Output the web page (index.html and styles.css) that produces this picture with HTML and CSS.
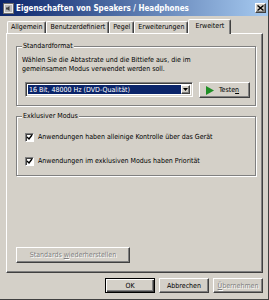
FILE: index.html
```html
<!DOCTYPE html>
<html lang="de">
<head>
    <meta charset="UTF-8">
    <title>Eigenschaften von Speakers / Headphones</title>
    <link rel="stylesheet" href="styles.css">
</head>
<body>
    <div class="window">
        <div class="titlebar">
            <svg class="app-icon" viewBox="0 0 11 11">
                <rect x="0.5" y="0.5" width="10" height="10" fill="#e8e8e8" stroke="#6b6b6b"/>
                <rect x="2" y="2" width="7" height="7" fill="#b8b8b8"/>
                <path d="M3 4.5h1.5l2-1.5v5l-2-1.5H3z" fill="#404040"/>
            </svg>
            <span class="title">Eigenschaften von Speakers / Headphones</span>
            <div class="close-btn">
                <svg viewBox="0 0 7 6" width="7" height="6">
                    <path d="M0.5 0.5l6 5M6.5 0.5l-6 5" stroke="#000" stroke-width="1.4"/>
                </svg>
            </div>
        </div>

        <div class="content">
            <div class="tabs">
                <div class="tab">Allgemein</div>
                <div class="tab">Benutzerdefiniert</div>
                <div class="tab">Pegel</div>
                <div class="tab">Erweiterungen</div>
                <div class="tab active">Erweitert</div>
            </div>

            <div class="tab-panel">
                <fieldset class="group format-group">
                    <legend>Standardformat</legend>
                    <p class="hint">Wählen Sie die Abtastrate und die Bittiefe aus, die im<br>gemeinsamen Modus verwendet werden soll.</p>
                    <div class="format-row">
                        <div class="combo">
                            <span class="combo-value">16 Bit, 48000 Hz (DVD-Qualität)</span>
                            <span class="combo-arrow">
                                <svg viewBox="0 0 5 3" width="5" height="3"><path d="M0 0h5L2.5 3z" fill="#000"/></svg>
                            </span>
                        </div>
                        <div class="btn test-btn">
                            <svg viewBox="0 0 8 9" width="8" height="9"><path d="M0 0l8 4.5L0 9z" fill="#1f8f25"/></svg>
                            <span>Teste<u>n</u></span>
                        </div>
                    </div>
                </fieldset>

                <fieldset class="group exclusive-group">
                    <legend>Exklusiver Modus</legend>
                    <div class="check">
                        <span class="box"><svg viewBox="0 0 7 7" width="7" height="7"><path d="M1 3l2 2 3-4" stroke="#000" stroke-width="1.4" fill="none"/></svg></span>
                        <span>Anwendungen haben alleinige Kontrolle über das Gerät</span>
                    </div>
                    <div class="check">
                        <span class="box"><svg viewBox="0 0 7 7" width="7" height="7"><path d="M1 3l2 2 3-4" stroke="#000" stroke-width="1.4" fill="none"/></svg></span>
                        <span>Anwendungen im exklusiven Modus haben Priorität</span>
                    </div>
                </fieldset>

                <div class="btn disabled defaults-btn"><span>Standards <u>w</u>iederherstellen</span></div>
            </div>

            <div class="footer">
                <div class="btn default">OK</div>
                <div class="btn">Abbrechen</div>
                <div class="btn disabled"><span><u>Ü</u>bernehmen</span></div>
            </div>
        </div>
    </div>
</body>
</html>
```

FILE: styles.css
```css
* {
    box-sizing: border-box;
}
body {
    margin: 0;
    background-color: #d4d0c8;
    font-family: "DejaVu Sans Condensed", "DejaVu Sans", sans-serif;
    font-size: 7px;
    color: #000;
}
.window {
    width: 269px;
    height: 300px;
    display: flex;
    flex-direction: column;
    border-right: 1px solid #404040;
    border-bottom: 1px solid #404040;
}
.titlebar {
    height: 16px;
    display: flex;
    align-items: center;
    padding: 0 2px 0 3px;
    background: linear-gradient(to right, #0a246a, #a6caf0);
}
.app-icon {
    width: 11px;
    height: 11px;
    margin-right: 2px;
}
.title {
    flex: 1;
    color: #fff;
    font-weight: bold;
    font-size: 8px;
    white-space: nowrap;
}
.close-btn {
    width: 11px;
    height: 10px;
    display: flex;
    align-items: center;
    justify-content: center;
    background-color: #d4d0c8;
    border: 1px solid;
    border-color: #fff #404040 #404040 #fff;
    box-shadow: inset -1px -1px #808080;
}

.content {
    flex: 1;
    display: flex;
    flex-direction: column;
    padding: 0 5px 0 6px;
}
.tabs {
    display: flex;
    align-items: flex-end;
    height: 17px;
    padding-left: 1px;
}
.tab {
    height: 12px;
    line-height: 11px;
    padding: 0 3px;
    border: 1px solid;
    border-bottom: none;
    border-color: #fff #404040 transparent #fff;
    border-radius: 2px 2px 0 0;
    box-shadow: inset -1px 0 #808080;
    white-space: nowrap;
}
.tab.active {
    height: 15px;
    line-height: 13px;
    margin-bottom: -1px;
    padding: 0 6px;
    position: relative;
    z-index: 1;
    background-color: #d4d0c8;
}
.tab-panel {
    flex: 1;
    display: flex;
    flex-direction: column;
    padding: 7px 6px 9px 9px;
    border: 1px solid;
    border-color: #fff #404040 #404040 #fff;
    box-shadow: inset -1px -1px #808080;
}

.group {
    margin: 0;
    min-width: 0;
    padding: 0 5px;
    border: 1px solid #808080;
    box-shadow: inset 1px 1px #fff, 1px 1px #fff;
}
.group legend {
    padding: 0 1px;
    line-height: 10px;
    background-color: #d4d0c8;
}
.format-group {
    padding-top: 5px;
    padding-bottom: 7px;
}
.hint {
    margin: 0;
    line-height: 9px;
}
.format-row {
    display: flex;
    align-items: flex-start;
    gap: 6px;
    margin: 8px 0 0 3px;
}
.combo {
    flex: 1;
    height: 15px;
    display: flex;
    padding: 2px;
    background-color: #fff;
    border: 1px solid;
    border-color: #808080 #fff #fff #808080;
    box-shadow: inset 1px 1px #404040, inset -1px -1px #d4d0c8;
}
.combo-value {
    flex: 1;
    line-height: 11px;
    padding-left: 1px;
    color: #fff;
    background-color: #0a246a;
    white-space: nowrap;
}
.combo-arrow {
    width: 9px;
    display: flex;
    align-items: center;
    justify-content: center;
    background-color: #d4d0c8;
    border: 1px solid;
    border-color: #fff #404040 #404040 #fff;
    box-shadow: inset -1px -1px #808080;
}

.btn {
    height: 15px;
    display: flex;
    align-items: center;
    justify-content: center;
    background-color: #d4d0c8;
    border: 1px solid;
    border-color: #fff #404040 #404040 #fff;
    box-shadow: inset -1px -1px #808080;
    white-space: nowrap;
}
.btn u {
    text-decoration-thickness: 1px;
    text-underline-offset: 1px;
}
.btn.disabled {
    color: #808080;
    text-shadow: 1px 1px #fff;
}
.test-btn {
    width: 51px;
    height: 16px;
    gap: 5px;
    padding-right: 4px;
}
.exclusive-group {
    margin-top: 5px;
    padding-top: 11px;
    padding-bottom: 9px;
}
.check {
    display: flex;
    align-items: center;
    height: 10px;
    margin-left: 3px;
    white-space: nowrap;
}
.check + .check {
    margin-top: 14px;
}
.box {
    width: 9px;
    height: 9px;
    margin-right: 4px;
    display: flex;
    align-items: center;
    justify-content: center;
    background-color: #fff;
    border: 1px solid;
    border-color: #808080 #fff #fff #808080;
    box-shadow: inset 1px 1px #404040;
}
.defaults-btn {
    margin-top: auto;
    align-self: flex-start;
    width: 114px;
    height: 16px;
}

.footer {
    height: 26px;
    display: flex;
    justify-content: flex-end;
    gap: 4px;
    padding-top: 5px;
}
.footer .btn {
    width: 50px;
}
.footer .btn.default {
    border-color: #000;
    box-shadow: inset 1px 1px #fff, inset -1px -1px #404040, inset -2px -2px #808080;
}
```
